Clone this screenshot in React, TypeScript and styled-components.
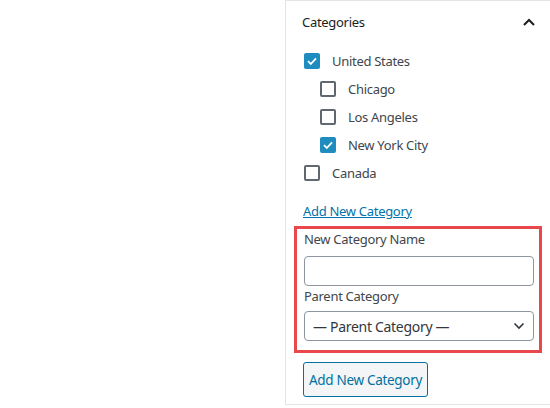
import React from "react";
import styled, { createGlobalStyle } from "styled-components";

const GlobalStyle = createGlobalStyle`
  html, body {
    margin: 0;
    padding: 0;
    background: #fff;
  }
  body {
    font-family: "Noto Sans", "Open Sans", sans-serif;
    font-size: 13px;
    letter-spacing: -0.3px;
    color: #40464d;
  }
`;

const Page = styled.div`
  display: flex;
  width: 550px;
  height: 408px;
  overflow: hidden;
`;

const Gutter = styled.div`
  width: 285px;
  flex-shrink: 0;
`;

const Panel = styled.div`
  flex: 1;
  height: 405px;
  box-sizing: border-box;
  border-left: 1px solid #e2e4e7;
  border-top: 1px solid #e2e4e7;
  border-bottom: 1px solid #e2e4e7;
  padding: 0 0 0 16px;
`;

const Header = styled.div`
  display: flex;
  align-items: center;
  justify-content: space-between;
  height: 42px;
  padding-right: 15px;
  font-size: 13px;
  color: #191e23;
`;

const List = styled.ul`
  list-style: none;
  margin: 4px 0 0;
  padding: 0 0 0 2px;
`;

const Row = styled.li<{ depth: number }>`
  display: flex;
  align-items: center;
  gap: 12px;
  height: 28px;
  padding-left: ${({ depth }) => depth * 16}px;
`;

const Box = styled.span<{ checked: boolean }>`
  width: 16px;
  height: 16px;
  box-sizing: border-box;
  border-radius: 2px;
  display: flex;
  align-items: center;
  justify-content: center;
  background: ${({ checked }) => (checked ? "#1e8cbe" : "#fff")};
  border: ${({ checked }) => (checked ? "none" : "2px solid #60676f")};
`;

const Label = styled.span`
  color: #40464d;
  line-height: 20px;
`;

const AddLink = styled.a`
  display: inline-block;
  margin: 14px 0 0 1px;
  line-height: 20px;
  color: #0073aa;
  text-decoration: underline;
  cursor: pointer;
`;

const Highlight = styled.div`
  margin: 5px 8px 0 -8px;
  border: 3px solid #e8484c;
  padding: 0 5px 9px 7px;
`;

const FieldLabel = styled.div`
  line-height: 20px;
  color: #40464d;
`;

const TextInput = styled.input`
  display: block;
  width: 100%;
  height: 30px;
  box-sizing: border-box;
  margin: 7px 0 0;
  border: 1px solid #8d96a0;
  border-radius: 4px;
  background: #fff;
`;

const SelectBox = styled.div`
  margin-top: 5px;
  height: 30px;
  box-sizing: border-box;
  border: 1px solid #8d96a0;
  border-radius: 4px;
  display: flex;
  align-items: center;
  justify-content: space-between;
  padding: 0 8px 0 8px;
  font-size: 14px;
  color: #32373c;
`;

const Button = styled.button`
  margin: 9px 0 0 1px;
  width: 125px;
  height: 35px;
  border: 1px solid #0071a1;
  border-radius: 3px;
  background: #f3f5f6;
  color: #0071a1;
  font-family: inherit;
  font-size: 13.5px;
  letter-spacing: -0.3px;
  padding: 0;
`;

const Check = () => (
  <svg width="12" height="12" viewBox="0 0 12 12">
    <path d="M2 6.2 L4.8 9 L10 3.4" fill="none" stroke="#fff" strokeWidth="1.8" />
  </svg>
);

const cats = [
  { name: "United States", depth: 0, checked: true },
  { name: "Chicago", depth: 1, checked: false },
  { name: "Los Angeles", depth: 1, checked: false },
  { name: "New York City", depth: 1, checked: true },
  { name: "Canada", depth: 0, checked: false },
];

export default function App() {
  return (
    <Page>
      <GlobalStyle />
      <Gutter />
      <Panel>
        <Header>
          <span>Categories</span>
          <svg width="12" height="8" viewBox="0 0 12 8">
            <path d="M1 7 L6 2 L11 7" fill="none" stroke="#191e23" strokeWidth="2" />
          </svg>
        </Header>
        <List>
          {cats.map((c) => (
            <Row key={c.name} depth={c.depth}>
              <Box checked={c.checked}>{c.checked && <Check />}</Box>
              <Label>{c.name}</Label>
            </Row>
          ))}
        </List>
        <AddLink>Add New Category</AddLink>
        <Highlight>
          <FieldLabel>New Category Name</FieldLabel>
          <TextInput />
          <FieldLabel>Parent Category</FieldLabel>
          <SelectBox>
            <span>— Parent Category —</span>
            <svg width="12" height="8" viewBox="0 0 12 8">
              <path d="M1.5 1.5 L6 6 L10.5 1.5" fill="none" stroke="#32373c" strokeWidth="1.6" />
            </svg>
          </SelectBox>
        </Highlight>
        <Button>Add New Category</Button>
      </Panel>
    </Page>
  );
}
